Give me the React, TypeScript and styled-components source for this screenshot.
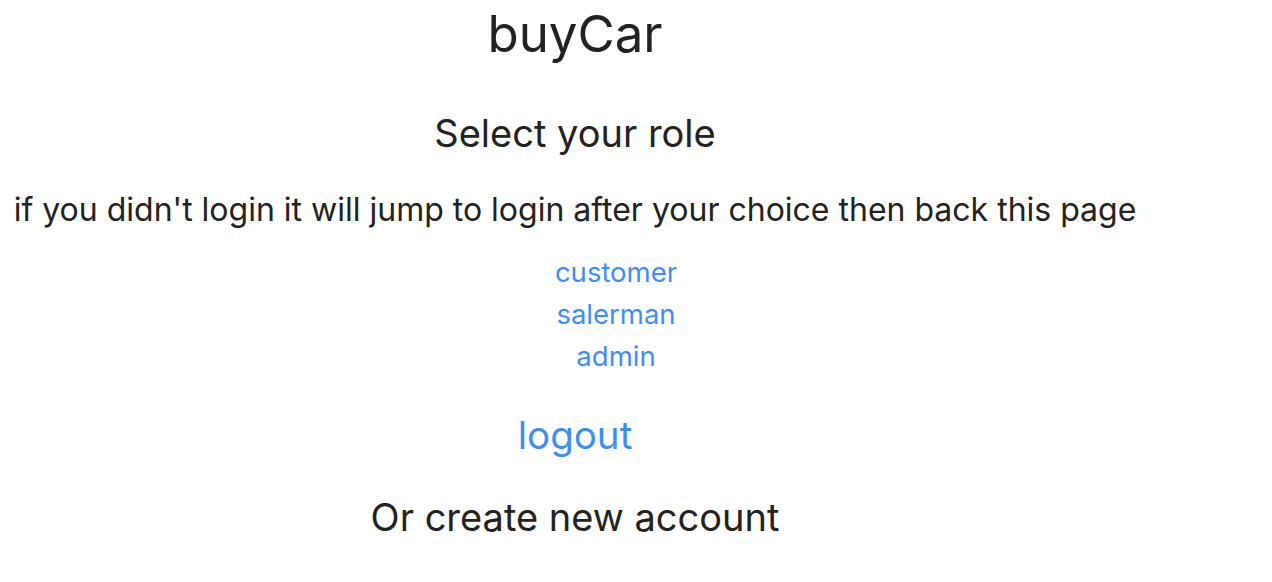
import React from "react";
import styled, { createGlobalStyle } from "styled-components";

const GlobalStyle = createGlobalStyle`
  body {
    margin: 0;
    background: #ffffff;
    font-family: Inter, "Noto Sans", sans-serif;
    color: #222222;
  }
`;

const roles = ["customer", "salerman", "admin"];

export default function App() {
  return (
    <>
      <GlobalStyle />
      <Page>
        <Title>buyCar</Title>
        <Heading>Select your role</Heading>
        <Hint>
          if you didn't login it will jump to login after your choice then back
          this page
        </Hint>
        <RoleList>
          {roles.map((role) => (
            <li key={role}>
              <RoleLink href="#">{role}</RoleLink>
            </li>
          ))}
        </RoleList>
        <LogoutLink href="#">logout</LogoutLink>
        <Heading as="h3" $gap={37}>
          Or create new account
        </Heading>
      </Page>
    </>
  );
}

const Page = styled.div`
  width: 1150px;
  display: flex;
  flex-direction: column;
  align-items: center;
  text-align: center;
`;

const Title = styled.h1`
  margin: 4px 0 0;
  font-size: 51px;
  font-weight: 400;
  line-height: 60px;
`;

const Heading = styled.h2<{ $gap?: number }>`
  margin: ${(p) => p.$gap ?? 47}px 0 0;
  font-size: 38px;
  font-weight: 400;
  line-height: 44px;
`;

const Hint = styled.p`
  margin: 36px 0 0;
  font-size: 32px;
  font-weight: 400;
  line-height: 38px;
  white-space: nowrap;
`;

const RoleList = styled.ul`
  list-style: none;
  margin: 22px 0 0;
  padding: 0 0 0 82px;
  font-size: 27.5px;
  li {
    line-height: 42px;
  }
`;

const RoleLink = styled.a`
  color: #3f8ff2;
  text-decoration: none;
`;

const LogoutLink = styled.a`
  margin-top: 35px;
  font-size: 38.5px;
  line-height: 46px;
  color: #3f8ff2;
  text-decoration: none;
`;
